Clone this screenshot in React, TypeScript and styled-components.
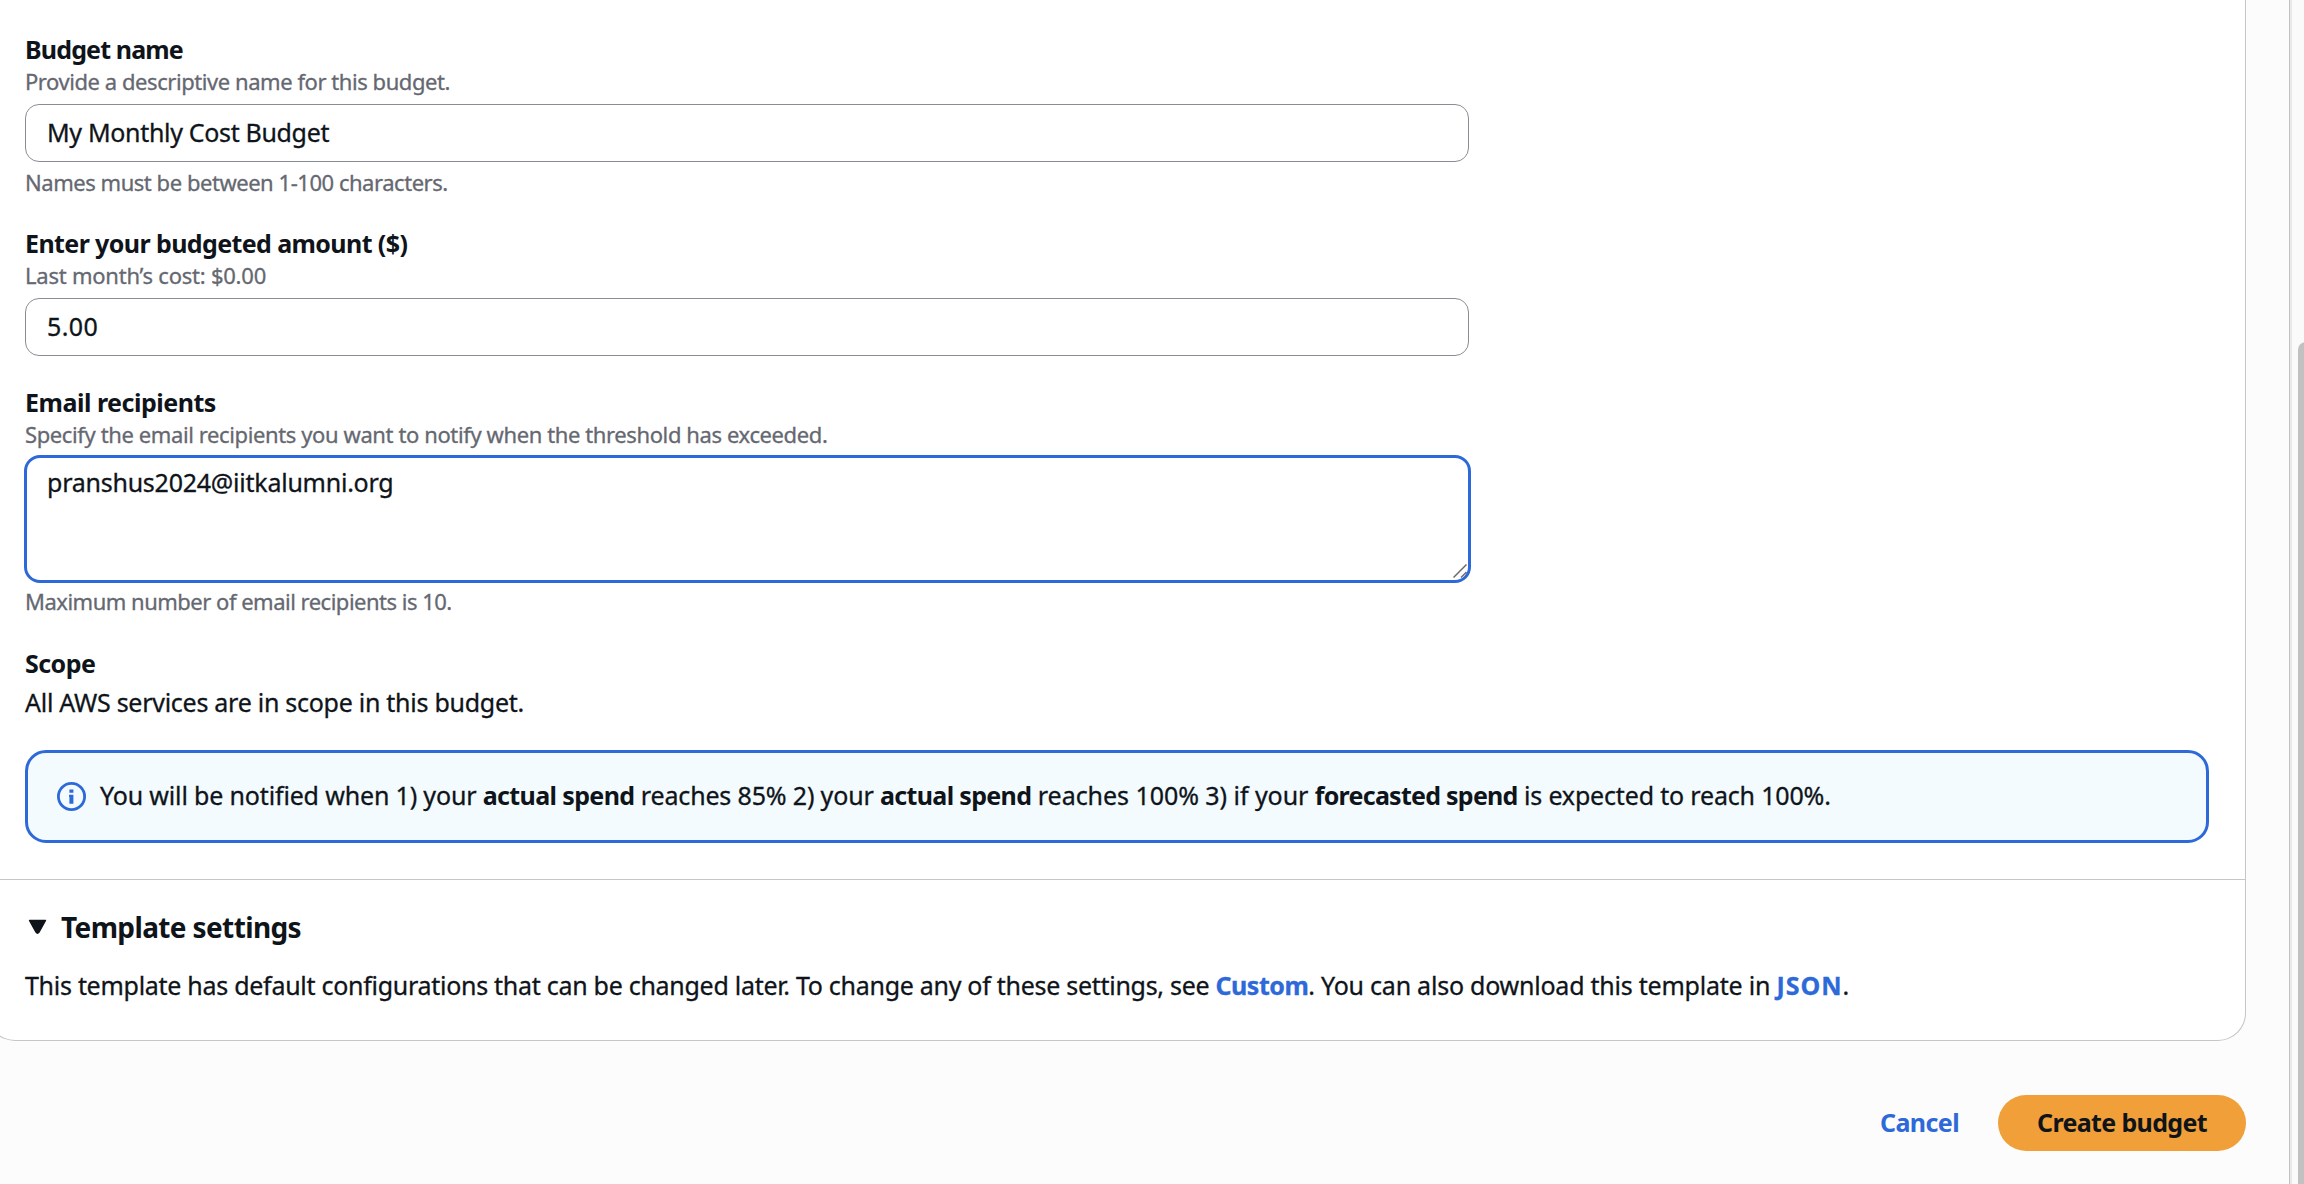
import React from 'react';
import styled, { createGlobalStyle } from 'styled-components';

const color = {
  text: '#0f141a',
  muted: '#656871',
  blue: '#2d69d8',
  line: '#c5c5ca',
  field: '#8c8c94',
  page: '#fcfcfc',
};

const GlobalStyle = createGlobalStyle`
  * { box-sizing: border-box; }
  body {
    margin: 0;
    overflow: hidden;
    background: ${color.page};
    color: ${color.text};
    font-family: "Noto Sans", "Open Sans", sans-serif;
    font-size: 25px;
    line-height: 36px;
    white-space: nowrap;
    -webkit-text-stroke: 0.3px currentColor;
  }
`;

const Page = styled.div`
  display: flex;
  width: 2304px;
  height: 1184px;
  overflow: hidden;
`;

const Main = styled.main`
  width: 2289px;
  flex: none;
`;

const ScrollGutter = styled.aside`
  flex: 1;
  display: flex;
  align-items: flex-end;
  border-left: 1px solid #c2c2c2;
  background: #fafafa;
  overflow: hidden;
`;

const GutterEdge = styled.div`
  width: 2px;
  height: 100%;
  background: #e8e8e8;
  flex: none;
`;

const ScrollThumb = styled.div`
  flex: none;
  width: 16px;
  height: 842px;
  margin-left: 6px;
  border-radius: 8px 8px 0 0;
  background: #c1c1c1;
`;

const Card = styled.section`
  width: 2259px;
  margin-left: -13px;
  height: 1041px;
  border: 1px solid ${color.line};
  border-top: none;
  border-radius: 0 0 28px 28px;
  background: #fff;
`;

const CardBody = styled.div`
  display: flex;
  flex-direction: column;
  height: 880px;
  padding: 31px 36px 0 37px;
  border-bottom: 1px solid ${color.line};
`;

const Track = styled.span<{ $ls: number }>`
  letter-spacing: ${(p) => p.$ls}px;
`;

const Field = styled.div<{ $after: number }>`
  display: flex;
  flex-direction: column;
  width: 1444px;
  margin-bottom: ${(p) => p.$after}px;
`;

const Label = styled.div`
  height: 36px;
  font-weight: 700;
  -webkit-text-stroke: 0;
`;

const Hint = styled.div<{ $after?: number }>`
  height: 29px;
  margin-bottom: ${(p) => p.$after ?? 0}px;
  font-size: 22px;
  line-height: 29px;
  color: ${color.muted};
`;

const TextInput = styled.div<{ $after?: number }>`
  height: 58px;
  margin-bottom: ${(p) => p.$after ?? 0}px;
  padding: 9px 21px;
  border: 1px solid ${color.field};
  border-radius: 14px;
  background: #fff;
`;

const TextArea = styled.div`
  position: relative;
  width: 1447px;
  height: 128px;
  margin: 0 -2px 4px -1px;
  padding: 6px 20px;
  border: 3px solid ${color.blue};
  border-radius: 16px;
  background: #fff;
`;

const ResizeGrip = styled.svg`
  position: absolute;
  right: 1px;
  bottom: 2px;
`;

const Scope = styled.div`
  display: flex;
  flex-direction: column;
  gap: 3px;
`;

const Alert = styled.div`
  display: flex;
  align-items: center;
  gap: 14px;
  width: 2184px;
  height: 93px;
  margin-top: 30px;
  padding-left: 29px;
  border: 3px solid ${color.blue};
  border-radius: 21px;
  background: #f3fbfe;
`;

const AlertText = styled.p`
  margin: 0 0 3px;
  white-space: pre;
`;

const Settings = styled.div`
  padding: 29px 37px 0;
`;

const SettingsHeader = styled.div`
  display: flex;
  align-items: center;
  gap: 14px;
  padding-left: 3px;
  height: 36px;
  font-size: 28px;
  font-weight: 700;
  -webkit-text-stroke: 0;
`;

const SettingsText = styled.p`
  margin: 22px 0 0;
  white-space: pre;
`;

const Link = styled.a<{ $ls: number }>`
  color: ${color.blue};
  font-weight: 700;
  letter-spacing: ${(p) => p.$ls}px;
`;

const CancelLink = styled(Link)`
  margin-bottom: 2px;
  -webkit-text-stroke: 0;
`;

const Bold = styled.b<{ $ls: number }>`
  letter-spacing: ${(p) => p.$ls}px;
  -webkit-text-stroke: 0;
`;

const Actions = styled.footer`
  display: flex;
  justify-content: flex-end;
  align-items: center;
  gap: 39px;
  padding: 54px 43px 0 0;
`;

const CreateButton = styled.div`
  display: flex;
  justify-content: center;
  width: 248px;
  height: 56px;
  padding-top: 9px;
  border-radius: 28px;
  background: #f19f38;
  font-weight: 700;
  -webkit-text-stroke: 0;
`;

const InfoIcon = () => (
  <svg width="29" height="29" viewBox="0 0 29 29" fill="none">
    <circle cx="14.5" cy="14.5" r="13.1" stroke={color.blue} strokeWidth="2.8" />
    <path d="M12.4 7.4h4v3.3h-4zM12 12.8h4.4v9h-4v-7h-.4z" fill={color.blue} />
  </svg>
);

const CaretIcon = () => (
  <svg width="19" height="16" viewBox="0 0 19 16">
    <path d="M1.5 1.5h16L11 13.2q-1.5 2.2-3 0z" fill={color.text} stroke={color.text} strokeWidth="1.4" strokeLinejoin="round" />
  </svg>
);

export default function App() {
  return (
    <>
      <GlobalStyle />
      <Page>
        <Main>
          <Card>
            <CardBody>
              <Field $after={28}>
                <Label><Track $ls={-0.85}>Budget name</Track></Label>
                <Hint $after={8}><Track $ls={-0.44}>Provide a descriptive name for this budget.</Track></Hint>
                <TextInput $after={6}><Track $ls={-0.33}>My Monthly Cost Budget</Track></TextInput>
                <Hint><Track $ls={-0.46}>Names must be between 1-100 characters.</Track></Hint>
              </Field>
              <Field $after={28}>
                <Label><Track $ls={-0.6}>Enter your budgeted amount ($)</Track></Label>
                <Hint $after={8}><Track $ls={-0.23}>Last month’s cost: $0.00</Track></Hint>
                <TextInput><Track $ls={0.4}>5.00</Track></TextInput>
              </Field>
              <Field $after={29}>
                <Label><Track $ls={-0.48}>Email recipients</Track></Label>
                <Hint $after={6}><Track $ls={-0.39}>Specify the email recipients you want to notify when the threshold has exceeded.</Track></Hint>
                <TextArea>
                  <Track $ls={-0.24}>pranshus2024@iitkalumni.org</Track>
                  <ResizeGrip width="14" height="14" viewBox="0 0 14 14" fill="none" stroke="#6b6b6b" strokeWidth="1.5">
                    <path d="M.5 13.5 13.5.5M8 13.5l5.5-5.5" />
                  </ResizeGrip>
                </TextArea>
                <Hint><Track $ls={-0.5}>Maximum number of email recipients is 10.</Track></Hint>
              </Field>
              <Scope>
                <Label><Track $ls={-0.55}>Scope</Track></Label>
                <Track $ls={-0.27}>All AWS services are in scope in this budget.</Track>
              </Scope>
              <Alert>
                <InfoIcon />
                <AlertText>
                  <Track $ls={-0.16}>{'You will be notified when 1) your '}</Track>
                  <Bold $ls={-0.62}>actual spend</Bold>
                  <Track $ls={-0.16}>{' reaches 85% 2) your '}</Track>
                  <Bold $ls={-0.65}>actual spend</Bold>
                  <Track $ls={-0.05}>{' reaches 100% 3) if your '}</Track>
                  <Bold $ls={-0.74}>forecasted spend</Bold>
                  <Track $ls={-0.17}>{' is expected to reach 100%.'}</Track>
                </AlertText>
              </Alert>
            </CardBody>
            <Settings>
              <SettingsHeader>
                <CaretIcon />
                <Track $ls={-0.62}>Template settings</Track>
              </SettingsHeader>
              <SettingsText>
                <Track $ls={-0.28}>{'This template has default configurations that can be changed later. To change any of these settings, see '}</Track>
                <Link $ls={-0.5}>Custom</Link>
                <Track $ls={-0.23}>{'. You can also download this template in '}</Track>
                <Link $ls={1}>JSON</Link>
                <Track $ls={0}>.</Track>
              </SettingsText>
            </Settings>
          </Card>
          <Actions>
            <CancelLink $ls={-0.6}>Cancel</CancelLink>
            <CreateButton><Track $ls={-0.65}>Create budget</Track></CreateButton>
          </Actions>
        </Main>
        <ScrollGutter>
          <GutterEdge />
          <ScrollThumb />
        </ScrollGutter>
      </Page>
    </>
  );
}
